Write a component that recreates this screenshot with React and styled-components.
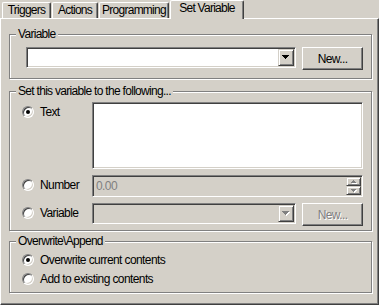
import React from "react";
import styled, { createGlobalStyle } from "styled-components";

const FACE = "#d4d0c8";
const SHADOW = "#808080";
const DARK = "#404040";
const LIGHT = "#ffffff";

const GlobalStyle = createGlobalStyle`
  html, body {
    margin: 0;
    padding: 0;
    background: ${FACE};
  }
  body {
    font-family: "Liberation Sans", Arial, sans-serif;
    font-size: 12px;
    letter-spacing: -0.6px;
    color: #000;
    overflow: hidden;
  }
  * {
    box-sizing: border-box;
  }
`;

const Window = styled.div`
  width: 379px;
  height: 305px;
  display: flex;
  flex-direction: column;
`;

const TabStrip = styled.div`
  display: flex;
  align-items: flex-end;
  gap: 1px;
  height: 18px;
  padding-left: 2px;
  position: relative;
  z-index: 1;
`;

const Tab = styled.div`
  width: ${(p) => p.$w}px;
  height: ${(p) => (p.$active ? 19 : 16)}px;
  margin-bottom: ${(p) => (p.$active ? -1 : 0)}px;
  background: ${FACE};
  border-top: 1px solid ${LIGHT};
  border-left: 1px solid ${LIGHT};
  border-right: 1px solid ${DARK};
  border-radius: 2px 2px 0 0;
  box-shadow: inset -1px 0 ${SHADOW};
  line-height: 14px;
  letter-spacing: -0.75px;
  text-align: center;
  white-space: nowrap;
`;

const Panel = styled.div`
  height: 288px;
  background: ${FACE};
  border-top: 1px solid ${LIGHT};
  border-left: 1px solid ${LIGHT};
  border-right: 1px solid ${DARK};
  border-bottom: 1px solid ${DARK};
  box-shadow: inset -1px -1px ${SHADOW};
  padding: 15px 6px 0 8px;
  display: flex;
  flex-direction: column;
`;

const Group = styled.div`
  position: relative;
  border: 1px solid ${SHADOW};
  box-shadow: inset 1px 1px ${LIGHT}, 1px 1px ${LIGHT};
  padding: ${(p) => p.$pad};
  margin-top: ${(p) => p.$gap || 0}px;
  display: flex;
  flex-direction: ${(p) => (p.$column ? "column" : "row")};
  gap: ${(p) => p.$rowGap || 0}px;
  align-items: flex-start;
`;

const GroupLabel = styled.span`
  position: absolute;
  top: -8px;
  left: 6px;
  padding: 0 2px;
  background: ${FACE};
  line-height: 14px;
  letter-spacing: -0.7px;
  white-space: nowrap;
`;

const Sunken = styled.div`
  border: 1px solid;
  border-color: ${SHADOW} ${LIGHT} ${LIGHT} ${SHADOW};
  box-shadow: inset 1px 1px ${DARK}, inset -1px -1px ${FACE};
  background: ${(p) => (p.$disabled ? FACE : "#fff")};
  padding: 1px;
`;

const Combo = styled(Sunken)`
  width: ${(p) => p.$w}px;
  height: 21px;
  flex: none;
  display: flex;
  justify-content: flex-end;
`;

const ArrowButton = styled.div`
  width: ${(p) => p.$w || 16}px;
  height: ${(p) => p.$h || 17}px;
  background: ${FACE};
  border: 1px solid;
  border-color: ${FACE} ${DARK} ${DARK} ${FACE};
  box-shadow: inset 1px 1px ${LIGHT}, inset -1px -1px ${SHADOW};
  display: flex;
  align-items: center;
  justify-content: center;
`;

const Button = styled.button`
  width: 61px;
  height: 23px;
  flex: none;
  margin: 0;
  padding: 0;
  font: inherit;
  letter-spacing: inherit;
  background: ${FACE};
  border: 1px solid;
  border-color: ${LIGHT} ${DARK} ${DARK} ${LIGHT};
  box-shadow: inset -1px -1px ${SHADOW};
  color: ${(p) => (p.disabled ? SHADOW : "#000")};
  text-shadow: ${(p) => (p.disabled ? `1px 1px ${LIGHT}` : "none")};
`;

const Row = styled.div`
  display: flex;
  align-items: flex-start;
  gap: ${(p) => p.$gap || 0}px;
`;

const OptionRow = styled.div`
  display: flex;
  align-items: flex-start;
  width: 100%;
`;

const Option = styled.label`
  display: flex;
  align-items: center;
  gap: 6px;
  height: 12px;
  width: ${(p) => (p.$w ? `${p.$w}px` : "auto")};
  flex: none;
  margin-top: ${(p) => p.$offset || 0}px;
  line-height: 12px;
  white-space: nowrap;
`;

const Radio = styled.span`
  position: relative;
  flex: none;
  width: 12px;
  height: 12px;
  border-radius: 50%;
  border: 1px solid;
  border-color: ${SHADOW} ${LIGHT} ${LIGHT} ${SHADOW};
  box-shadow: inset 1px 1px ${DARK}, inset -1px -1px ${FACE};
  background: #fff;
  &::after {
    content: "";
    display: ${(p) => (p.$checked ? "block" : "none")};
    position: absolute;
    left: 3px;
    top: 3px;
    width: 4px;
    height: 4px;
    border-radius: 50%;
    background: #000;
  }
`;

const TextBox = styled(Sunken)`
  flex: 1;
  height: 67px;
`;

const NumberBox = styled(Sunken)`
  flex: 1;
  height: 22px;
  display: flex;
  align-items: center;
  padding: 1px 1px 1px 3px;
  color: ${SHADOW};
`;

const NumberValue = styled.span`
  flex: 1;
`;

const Spinner = styled.div`
  display: flex;
  flex-direction: column;
  align-self: stretch;
`;

function Arrow({ up, disabled, small }) {
  const rows = small ? [5, 3, 1] : [7, 5, 3, 1];
  const w = rows[0];
  const h = rows.length;
  const fill = disabled ? SHADOW : "#000";
  const draw = (color, dx, dy) =>
    rows.map((r, i) => (
      <rect
        key={`${color}${i}`}
        x={(w - r) / 2 + dx}
        y={(up ? h - 1 - i : i) + dy}
        width={r}
        height={1}
        fill={color}
      />
    ));
  return (
    <svg width={w + 1} height={h + 1} shapeRendering="crispEdges">
      {disabled && draw(LIGHT, 1, 1)}
      {draw(fill, 0, 0)}
    </svg>
  );
}

export default function App() {
  return (
    <Window>
      <GlobalStyle />
      <TabStrip>
        <Tab $w={49}>Triggers</Tab>
        <Tab $w={46}>Actions</Tab>
        <Tab $w={70}>Programming</Tab>
        <Tab $w={74} $active>
          Set Variable
        </Tab>
      </TabStrip>
      <Panel>
        <Group $pad="12px 8px 8px 16px" $rowGap={6}>
          <GroupLabel>Variable</GroupLabel>
          <Combo $w={270}>
            <ArrowButton>
              <Arrow />
            </ArrowButton>
          </Combo>
          <Button>New...</Button>
        </Group>

        <Group $gap={12} $pad="10px 8px 4px 12px" $column $rowGap={6}>
          <GroupLabel>Set this variable to the following...</GroupLabel>
          <OptionRow>
            <Option $w={70} $offset={4}>
              <Radio $checked />
              Text
            </Option>
            <TextBox />
          </OptionRow>
          <OptionRow>
            <Option $w={70} $offset={4}>
              <Radio />
              Number
            </Option>
            <NumberBox $disabled>
              <NumberValue>0.00</NumberValue>
              <Spinner>
                <ArrowButton $w={15} $h={9}>
                  <Arrow up small disabled />
                </ArrowButton>
                <ArrowButton $w={15} $h={9}>
                  <Arrow small disabled />
                </ArrowButton>
              </Spinner>
            </NumberBox>
          </OptionRow>
          <OptionRow>
            <Option $w={70} $offset={4}>
              <Radio />
              Variable
            </Option>
            <Row $gap={6}>
              <Combo $w={204} $disabled>
                <ArrowButton>
                  <Arrow disabled />
                </ArrowButton>
              </Combo>
              <Button disabled>New...</Button>
            </Row>
          </OptionRow>
        </Group>

        <Group $gap={10} $pad="12px 8px 7px 12px" $column $rowGap={7}>
          <GroupLabel>{"Overwrite\\Append"}</GroupLabel>
          <Option>
            <Radio $checked />
            Overwrite current contents
          </Option>
          <Option>
            <Radio />
            Add to existing contents
          </Option>
        </Group>
      </Panel>
    </Window>
  );
}
